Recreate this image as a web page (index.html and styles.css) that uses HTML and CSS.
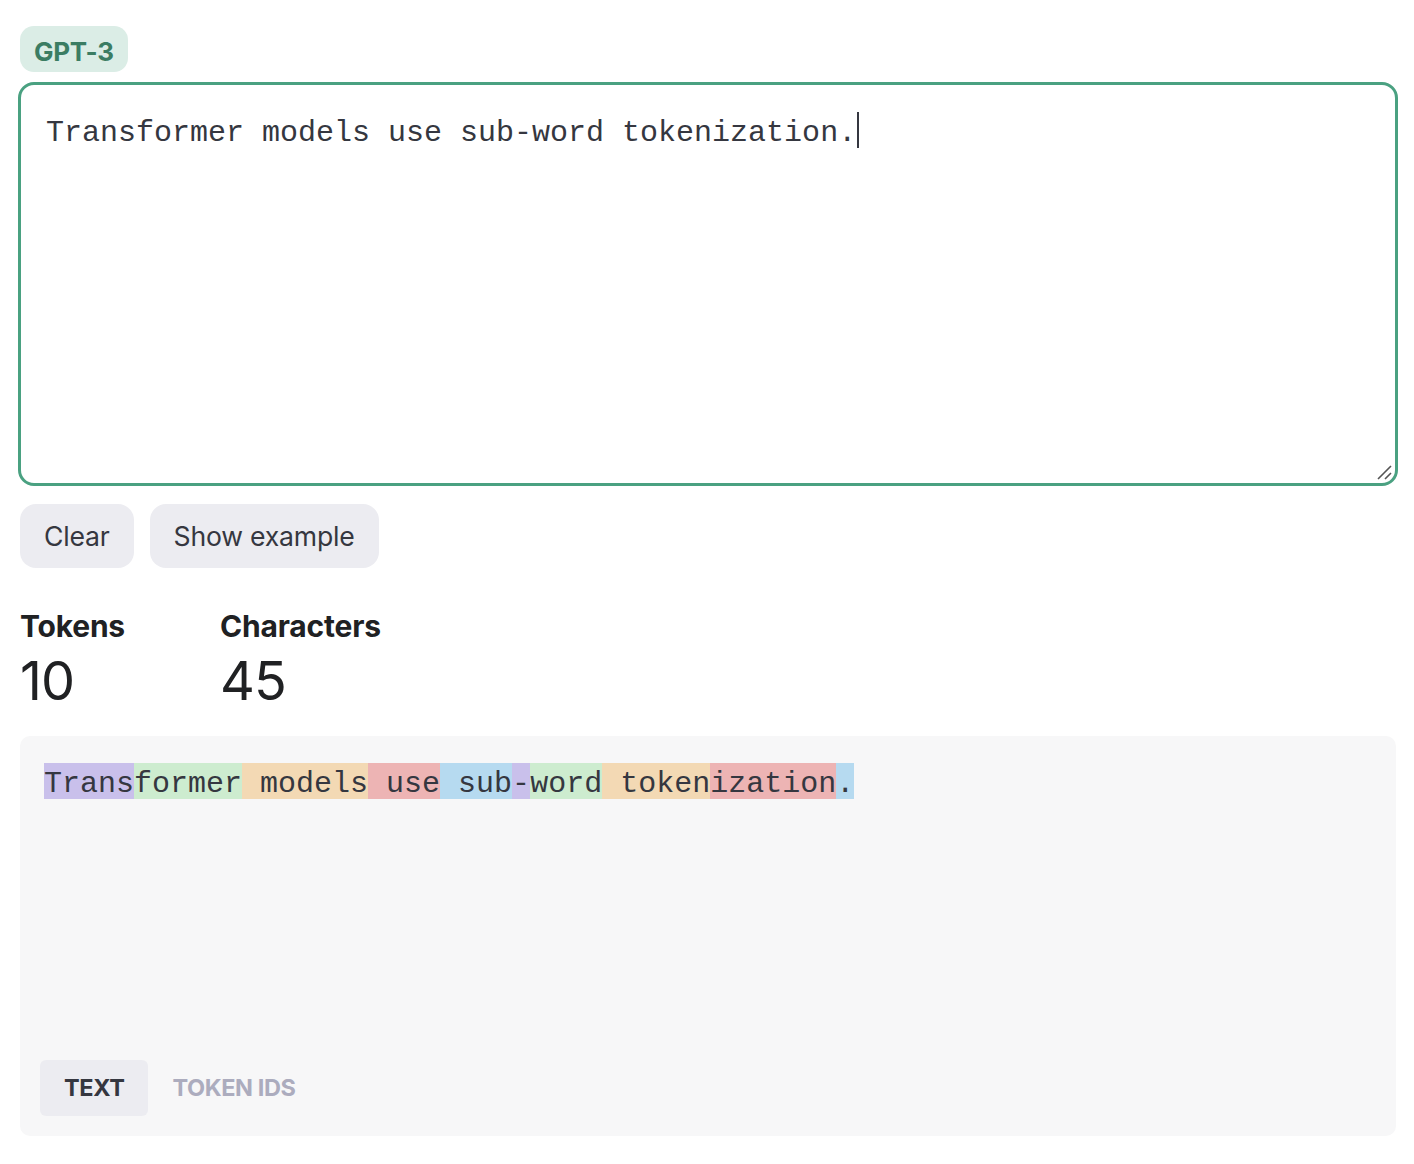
FILE: index.html
```html
<!DOCTYPE html>
<html>
<head>
<meta charset="utf-8">
<link rel="stylesheet" href="styles.css">
</head>
<body>
<div class="page">
  <div class="badge">GPT-3</div>
  <div class="editor">
    <div class="editor-text">Transformer models use sub-word tokenization.<span class="caret"></span></div>
    <svg class="grip" width="18" height="18" viewBox="0 0 18 18"><path d="M3 16 L16 3 M10 16 L16 10" stroke="#555" stroke-width="1.6" fill="none"/></svg>
  </div>
  <div class="actions">
    <button class="btn">Clear</button>
    <button class="btn">Show example</button>
  </div>
  <div class="stats">
    <div class="stat">
      <div class="stat-label">Tokens</div>
      <div class="stat-value">10</div>
    </div>
    <div class="stat">
      <div class="stat-label">Characters</div>
      <div class="stat-value">45</div>
    </div>
  </div>
  <div class="output">
    <div class="tokens"><span class="tok t-purple">Trans</span><span class="tok t-green">former</span><span class="tok t-orange"> models</span><span class="tok t-red"> use</span><span class="tok t-blue"> sub</span><span class="tok t-purple">-</span><span class="tok t-green">word</span><span class="tok t-orange"> token</span><span class="tok t-red">ization</span><span class="tok t-blue">.</span></div>
    <div class="tabs">
      <div class="tab active">TEXT</div>
      <div class="tab">TOKEN IDS</div>
    </div>
  </div>
</div>
</body>
</html>
```
FILE: styles.css
```css
* { box-sizing: border-box; }
html, body { margin: 0; padding: 0; background: #ffffff; }
body {
  font-family: Inter, "Noto Sans", "Liberation Sans", sans-serif;
  color: #353740;
}
.page {
  padding: 26px 18px 0 20px;
  display: flex;
  flex-direction: column;
  align-items: flex-start;
}
.badge {
  background: #dbede6;
  color: #3b7d63;
  font-weight: 700;
  font-size: 26px;
  line-height: 46px;
  height: 46px;
  padding: 3px 14px 0 14px;
  border-radius: 14px;
  letter-spacing: -0.3px;
}
.editor {
  position: relative;
  margin-top: 10px;
  margin-left: -2px;
  width: 1380px;
  height: 404px;
  border: 3px solid #4aa181;
  border-radius: 16px;
  padding: 27px 25px;
  background: #fff;
}
.editor-text {
  font-family: "Liberation Mono", "DejaVu Sans Mono", monospace;
  font-size: 30px;
  line-height: 32px;
  padding-top: 5px;
  color: #353740;
  white-space: pre-wrap;
}
.caret {
  display: inline-block;
  width: 2px;
  height: 36px;
  background: #353740;
  vertical-align: top;
  margin-top: -5px;
  margin-left: 1px;
}
.grip {
  position: absolute;
  right: 2px;
  bottom: 2px;
}
.actions {
  display: flex;
  gap: 16px;
  margin-top: 18px;
}
.btn {
  font-family: Inter, "Noto Sans", "Liberation Sans", sans-serif;
  font-size: 26.6px;
  color: #353740;
  background: #ececf1;
  border: none;
  border-radius: 16px;
  height: 64px;
  padding: 0 24px;
  letter-spacing: -0.2px;
}
.stats {
  display: grid;
  grid-template-columns: 200px auto;
  margin-top: 40px;
}
.stat-label {
  font-weight: 700;
  font-size: 30px;
  line-height: 36px;
  color: #202123;
  letter-spacing: -0.2px;
}
.stat-value {
  margin-top: 5px;
  font-size: 54px;
  line-height: 64px;
  color: #202123;
  letter-spacing: -1px;
}
.output {
  margin-top: 23px;
  width: 1376px;
  height: 400px;
  background: #f7f7f8;
  border-radius: 10px;
  padding: 27px 20px 20px 20px;
  display: flex;
  flex-direction: column;
}
.tokens {
  padding-left: 4px;
  font-family: "Liberation Mono", "DejaVu Sans Mono", monospace;
  font-size: 30px;
  line-height: 36px;
  color: #353740;
  white-space: pre;
}
.tok {
  display: inline-block;
  height: 36px;
  padding-top: 5px;
  line-height: 32px;
  vertical-align: top;
}
.t-purple { background: #c9c0eb; }
.t-green { background: #cdeccf; }
.t-orange { background: #f3d9b4; }
.t-red { background: #edb4b4; }
.t-blue { background: #b6daf0; }
.tabs {
  margin-top: auto;
  display: flex;
}
.tab {
  height: 56px;
  line-height: 56px;
  padding: 0 24px;
  font-size: 23.5px;
  font-weight: 700;
  color: #acacbe;
  border-radius: 6px;
  letter-spacing: -0.4px;
}
.tab.active {
  background: #ececf1;
  color: #353740;
}
```
